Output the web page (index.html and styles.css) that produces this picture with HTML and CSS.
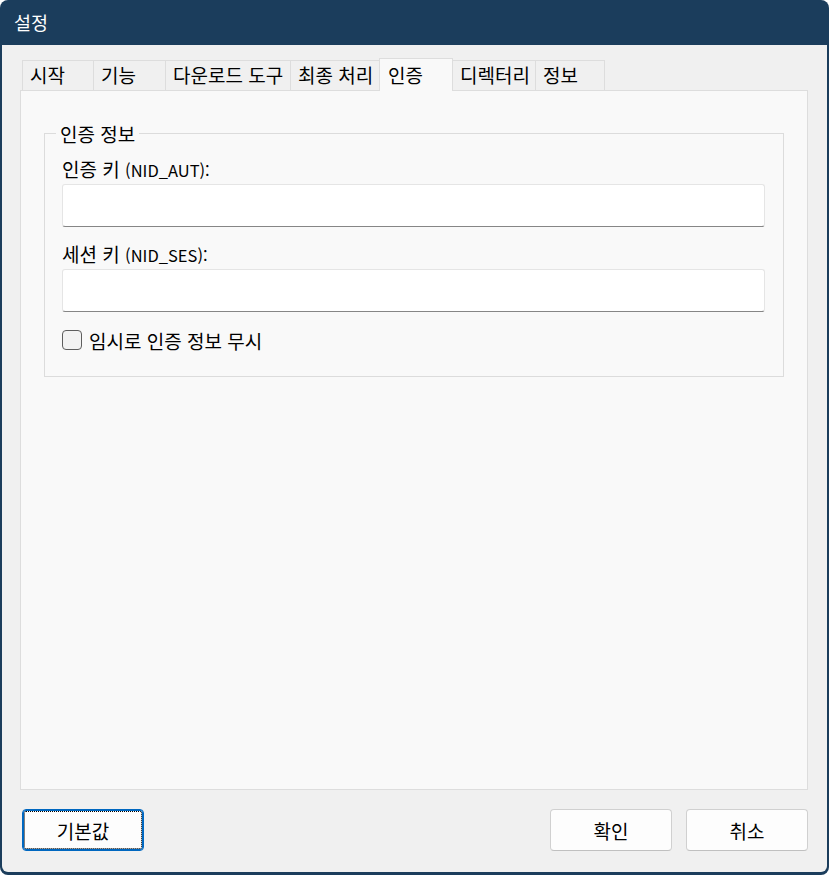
FILE: index.html
```html
<!DOCTYPE html>
<html lang="ko">
<head>
<meta charset="utf-8">
<title>설정</title>
<link rel="stylesheet" href="styles.css">
</head>
<body>
<div class="window">
  <div class="titlebar">설정</div>
  <div class="client">
    <div class="tabs">
      <div class="tab">시작</div>
      <div class="tab">기능</div>
      <div class="tab">다운로드 도구</div>
      <div class="tab">최종 처리</div>
      <div class="tab tab-active">인증</div>
      <div class="tab">디렉터리</div>
      <div class="tab">정보</div>
    </div>
    <div class="panel">
      <fieldset class="group">
        <legend class="group-title">인증 정보</legend>
        <label class="field-label" for="aut">인증 키 <span class="latin">(NID_AUT):</span></label>
        <input class="field-input" id="aut" type="text">
        <label class="field-label field-label-second" for="ses">세션 키 <span class="latin">(NID_SES):</span></label>
        <input class="field-input" id="ses" type="text">
        <label class="check-row">
          <span class="checkbox"></span>
          <span class="check-text">임시로 인증 정보 무시</span>
        </label>
      </fieldset>
    </div>
    <div class="buttons">
      <button class="btn btn-focused">기본값</button>
      <div class="btn-group">
        <button class="btn">확인</button>
        <button class="btn">취소</button>
      </div>
    </div>
  </div>
</div>
</body>
</html>
```

FILE: styles.css
```css
* { box-sizing: border-box; }

html, body {
  margin: 0;
  padding: 0;
  background: #ffffff;
}

body {
  font-family: "Noto Sans CJK KR", "Noto Sans", sans-serif;
  font-size: 19px;
  color: #000;
}

.latin {
  font-size: 16.5px;
  line-height: 1;
}

.window {
  width: 829px;
  height: 875px;
  background: #1b3d5c;
  border-radius: 8px;
  padding: 0 2px 3px 2px;
  display: flex;
  flex-direction: column;
  overflow: hidden;
}

.titlebar {
  height: 45px;
  flex: none;
  color: #fff;
  font-size: 18.5px;
  line-height: 44px;
  padding-left: 12px;
}

.client {
  flex: 1;
  background: #f0f0f0;
  border-radius: 0 0 6px 6px;
  padding: 13px 19px 21px 18px;
  display: flex;
  flex-direction: column;
}

.tabs {
  display: grid;
  grid-template-columns: 71px 72px 125px 89px 74px 82px 70px;
  align-items: end;
  height: 32px;
  flex: none;
  padding-left: 2px;
}

.tab {
  height: 30px;
  line-height: 28px;
  padding-left: 7px;
  border: 1px solid #dddddd;
  border-bottom: none;
  border-right: none;
  background: #f0f0f0;
  white-space: nowrap;
}

.tab:nth-child(7) { border-right: 1px solid #dddddd; }

.tab-active {
  height: 33px;
  margin-bottom: -1px;
  line-height: 31px;
  padding-left: 8px;
  background: #f9f9f9;
  border: 1px solid #dddddd;
  border-bottom: none;
  position: relative;
  z-index: 1;
}

.tab-active + .tab { border-left: none; }

.panel {
  flex: 1;
  background: #f9f9f9;
  border: 1px solid #dddddd;
  padding: 31px 23px 0 23px;
}

.group {
  margin: 0;
  border: 1px solid #dcdcdc;
  padding: 12px 18px 26px 17px;
  display: flex;
  flex-direction: column;
}

.group-title {
  padding: 0 4px;
  margin-left: -6px;
  line-height: 23px;
}

.field-label {
  display: block;
  height: 23px;
  line-height: 23px;
  margin-bottom: 4px;
}

.field-label-second {
  margin-top: 15px;
}

.field-input {
  display: block;
  width: 100%;
  height: 43px;
  border: 1px solid #e5e5e5;
  border-bottom: 1px solid #868686;
  border-radius: 3px;
  background: #fff;
  font: inherit;
  padding: 0 8px;
  outline: none;
}

.check-row {
  display: flex;
  align-items: center;
  margin-top: 18px;
  height: 20px;
}

.checkbox {
  width: 20px;
  height: 20px;
  border: 1px solid #5e5e5e;
  border-radius: 4px;
  background: #f3f3f3;
  flex: none;
}

.check-text {
  margin-left: 7px;
  line-height: 23px;
}

.buttons {
  flex: none;
  display: flex;
  justify-content: space-between;
  align-items: center;
  margin-top: 19px;
  padding-left: 2px;
}

.btn-group {
  display: flex;
  gap: 14px;
}

.btn {
  width: 122px;
  height: 42px;
  font: inherit;
  color: #000;
  background: #fdfdfd;
  border: 1px solid #d0d0d0;
  border-bottom-color: #c0c0c0;
  border-radius: 4px;
  padding: 0;
}

.btn-focused {
  width: 122px;
  border: 1px solid #0067c0;
  box-shadow: inset 0 0 0 1px #0067c0;
  outline: 1px dotted #000;
  outline-offset: -3px;
}
```
